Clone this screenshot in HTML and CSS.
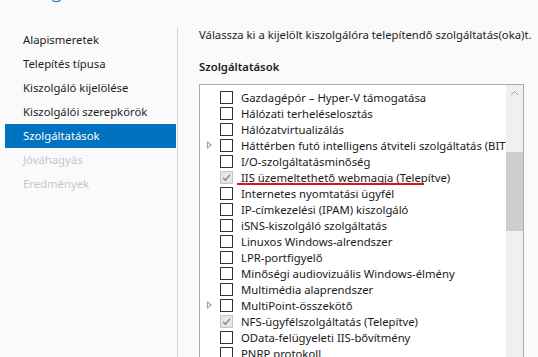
FILE: index.html
```html
<!DOCTYPE html>
<html lang="hu">
<head>
<meta charset="utf-8">
<title>Szolgáltatások kiválasztása</title>
<link rel="stylesheet" href="styles.css">
</head>
<body>
<div class="page">
  <header class="title"><span class="title-text">Szolgáltatások kiválasztása</span></header>
  <div class="main">
    <nav class="nav">
      <div class="nav-item">Alapismeretek</div>
      <div class="nav-item">Telepítés típusa</div>
      <div class="nav-item">Kiszolgáló kijelölése</div>
      <div class="nav-item">Kiszolgálói szerepkörök</div>
      <div class="nav-item active">Szolgáltatások</div>
      <div class="nav-item disabled">Jóváhagyás</div>
      <div class="nav-item disabled">Eredmények</div>
    </nav>
    <div class="sep"></div>
    <section class="content">
      <p class="intro">Válassza ki a kijelölt kiszolgálóra telepítendő szolgáltatás(oka)t.</p>
      <h2 class="label">Szolgáltatások</h2>
      <div class="listbox">
        <div class="rows">
          <div class="row"><span class="exp"></span><span class="cb"></span><span class="txt">Gazdagépór – Hyper-V támogatása</span></div>
          <div class="row"><span class="exp"></span><span class="cb"></span><span class="txt">Hálózati terheléselosztás</span></div>
          <div class="row"><span class="exp"></span><span class="cb"></span><span class="txt">Hálózatvirtualizálás</span></div>
          <div class="row"><span class="exp tri"></span><span class="cb"></span><span class="txt">Háttérben futó intelligens átviteli szolgáltatás (BITS)</span></div>
          <div class="row"><span class="exp"></span><span class="cb"></span><span class="txt">I/O-szolgáltatásminőség</span></div>
          <div class="row"><span class="exp"></span><span class="cb checked"><svg viewBox="0 0 13 13" width="13" height="13"><path d="M3 6.8 L5.4 9.2 L10 3.8" fill="none" stroke="#8a8a8a" stroke-width="1.4"/></svg></span><span class="txt">IIS üzemeltethető webmagja (Telepítve)</span><span class="redline"></span></div>
          <div class="row"><span class="exp"></span><span class="cb"></span><span class="txt">Internetes nyomtatási ügyfél</span></div>
          <div class="row"><span class="exp"></span><span class="cb"></span><span class="txt">IP-címkezelési (IPAM) kiszolgáló</span></div>
          <div class="row"><span class="exp"></span><span class="cb"></span><span class="txt">iSNS-kiszolgáló szolgáltatás</span></div>
          <div class="row"><span class="exp"></span><span class="cb"></span><span class="txt">Linuxos Windows-alrendszer</span></div>
          <div class="row"><span class="exp"></span><span class="cb"></span><span class="txt">LPR-portfigyelő</span></div>
          <div class="row"><span class="exp"></span><span class="cb"></span><span class="txt">Minőségi audiovizuális Windows-élmény</span></div>
          <div class="row"><span class="exp"></span><span class="cb"></span><span class="txt">Multimédia alaprendszer</span></div>
          <div class="row"><span class="exp tri"></span><span class="cb"></span><span class="txt">MultiPoint-összekötő</span></div>
          <div class="row"><span class="exp"></span><span class="cb checked"><svg viewBox="0 0 13 13" width="13" height="13"><path d="M3 6.8 L5.4 9.2 L10 3.8" fill="none" stroke="#8a8a8a" stroke-width="1.4"/></svg></span><span class="txt">NFS-ügyfélszolgáltatás (Telepítve)</span></div>
          <div class="row"><span class="exp"></span><span class="cb"></span><span class="txt">OData-felügyeleti IIS-bővítmény</span></div>
          <div class="row"><span class="exp"></span><span class="cb"></span><span class="txt">PNRP protokoll</span></div>
        </div>
        <div class="scrollbar">
          <div class="sb-up"><svg viewBox="0 0 17 17" width="17" height="17"><path d="M5 10 L8.5 6.5 L12 10" fill="none" stroke="#a6a6a6" stroke-width="1"/></svg></div>
          <div class="sb-track"><div class="sb-thumb"></div></div>
        </div>
      </div>
    </section>
  </div>
</div>
</body>
</html>
```
FILE: styles.css
```css
* { box-sizing: border-box; }
html, body { margin: 0; padding: 0; }
body {
  background: #fafafa;
  font-family: "Noto Sans", "Open Sans", sans-serif;
  font-size: 11.3px;
  color: #1e1e1e;
}
.page {
  width: 538px;
  height: 357px;
  overflow: hidden;
  display: flex;
  flex-direction: column;
}
.title {
  height: 4px;
  overflow: hidden;
  padding-left: 10px;
}
.title-text {
  display: block;
  font-size: 22px;
  line-height: 22px;
  margin-top: -23px;
  color: #1a6fb0;
  font-weight: 300;
  white-space: nowrap;
}
.main {
  flex: 1;
  display: flex;
  min-height: 0;
}
.nav {
  width: 177px;
  flex: none;
  padding: 24px 1px 0 5px;
  display: flex;
  flex-direction: column;
}
.nav-item {
  height: 24px;
  line-height: 24px;
  padding-left: 18px;
  color: #1e1e1e;
  white-space: nowrap;
}
.nav-item.active {
  background: #0072c0;
  color: #fff;
}
.nav-item.disabled { color: #c6c6c6; }
.sep {
  width: 1px;
  flex: none;
  margin-top: 24px;
  background: #d2d2d2;
}
.content {
  flex: 1;
  padding: 23px 0 0 21px;
  min-width: 0;
}
.intro {
  margin: 0;
  line-height: 16px;
  white-space: nowrap;
}
.label {
  margin: 16px 0 0;
  font-size: 11.3px;
  font-weight: 600;
  line-height: 16px;
}
.listbox {
  margin-top: 9px;
  width: 325px;
  height: 300px;
  border: 1px solid #ababab;
  background: #fff;
  display: flex;
  overflow: hidden;
}
.rows {
  flex: 1;
  min-width: 0;
  padding-top: 4px;
  overflow: hidden;
}
.row {
  height: 16px;
  display: flex;
  align-items: center;
  position: relative;
  white-space: nowrap;
}
.exp {
  width: 20px;
  flex: none;
  height: 16px;
  position: relative;
}
.exp.tri::before {
  content: "";
  position: absolute;
  left: 7px;
  top: 4px;
  border-left: 5px solid #a0a0a0;
  border-top: 4px solid transparent;
  border-bottom: 4px solid transparent;
}
.exp.tri::after {
  content: "";
  position: absolute;
  left: 8px;
  top: 6px;
  border-left: 2px solid #fff;
  border-top: 2px solid transparent;
  border-bottom: 2px solid transparent;
}
.cb {
  width: 13px;
  height: 13px;
  flex: none;
  border: 1px solid #333;
  background: #fff;
  position: relative;
}
.cb.checked {
  border-color: #c4c4c4;
  background: #e6e6e6;
}
.cb svg {
  position: absolute;
  left: -1px;
  top: -1px;
}
.txt {
  margin-left: 8px;
  color: #1a1a1a;
}
.redline {
  position: absolute;
  left: 37px;
  width: 187px;
  top: 14px;
  height: 2px;
  background: #e0141e;
}
.scrollbar {
  width: 17px;
  flex: none;
  background: #f0f0f0;
  display: flex;
  flex-direction: column;
}
.sb-up { height: 17px; flex: none; }
.sb-up svg { display: block; }
.sb-track { flex: 1; padding-top: 50px; }
.sb-thumb {
  height: 79px;
  background: #cdcdcd;
}
```
